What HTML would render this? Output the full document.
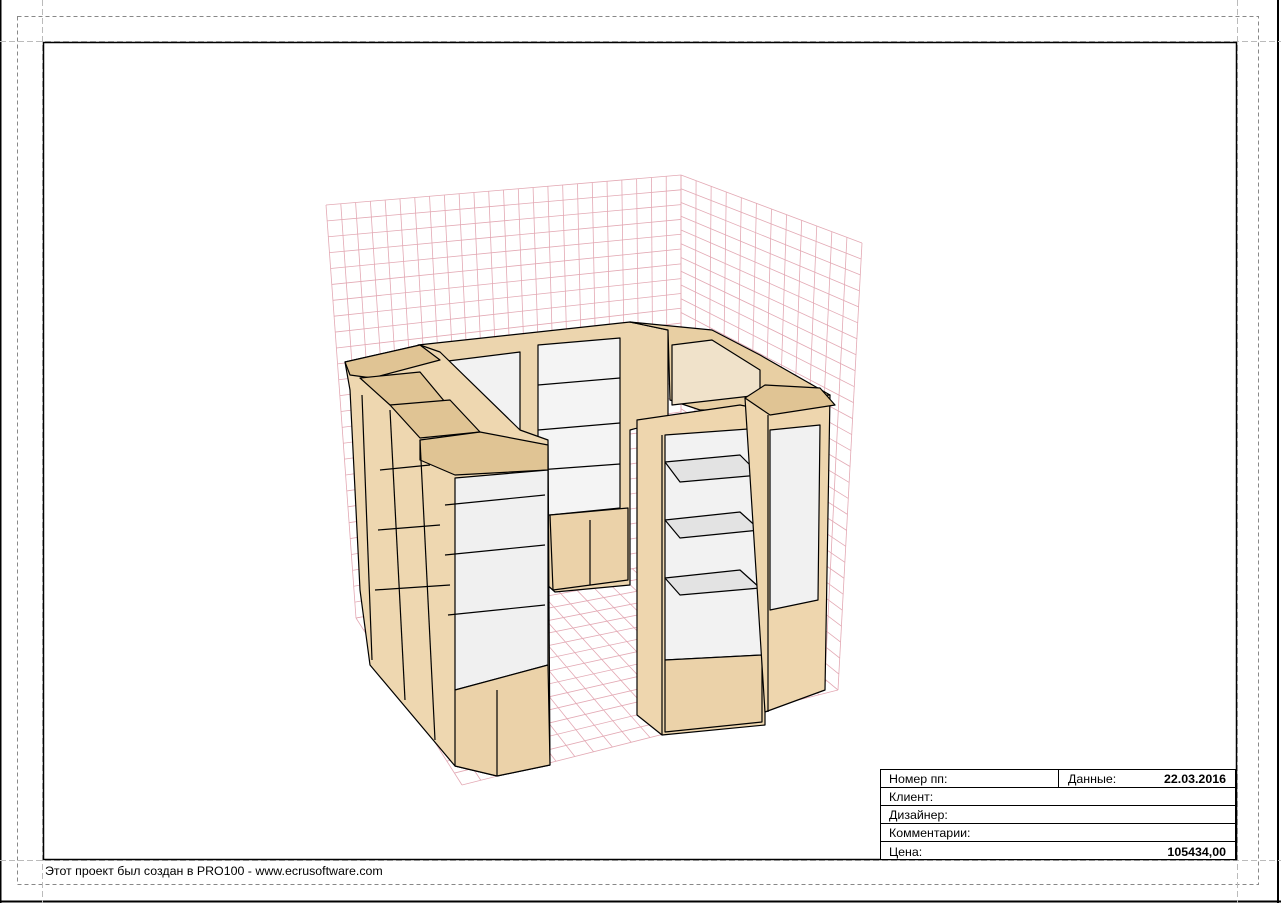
<!DOCTYPE html>
<html><head><meta charset="utf-8"><style>
html,body{margin:0;padding:0;background:#fff;width:1281px;height:903px;overflow:hidden;position:relative;font-family:"Liberation Sans",Arial,sans-serif}
.abs{position:absolute}
</style></head><body>
<svg class="abs" style="left:0;top:0" width="1281" height="903">
<line x1="0.5" y1="0" x2="0.5" y2="903" stroke="#000" stroke-width="2"/>
<line x1="1278" y1="0" x2="1278" y2="903" stroke="#000" stroke-width="2"/>
<line x1="0" y1="901.5" x2="1281" y2="901.5" stroke="#000" stroke-width="2"/>
<rect x="17.5" y="16.5" width="1241" height="868" fill="none" stroke="#888" stroke-dasharray="4,3"/>
<line x1="42.5" y1="0" x2="42.5" y2="903" stroke="#bbb" stroke-dasharray="6,3"/>
<line x1="0" y1="41.5" x2="1281" y2="41.5" stroke="#bbb" stroke-dasharray="6,3"/>
<line x1="1237.5" y1="0" x2="1237.5" y2="903" stroke="#bbb" stroke-dasharray="6,3"/>
<line x1="0" y1="860.5" x2="1281" y2="860.5" stroke="#bbb" stroke-dasharray="6,3"/>
<rect x="43.5" y="42.5" width="1193" height="817" fill="#fff" stroke="#000" stroke-width="1.5"/>
<g id="grid" stroke="#e3a9b4" stroke-width="0.8" fill="none"></g>
<g stroke="#000" stroke-width="1.2" stroke-linejoin="round">
<polygon points="418,345 630,322 668,330 668,420 630,430 630,585 555,592 420,470" fill="#ecd5ae"/>
<polygon points="440,362 520,352 520,430 440,420" fill="#f2f2f2"/>
<polygon points="538,345 620,338 620,508 550,515 538,515" fill="#f4f4f4"/>
<polygon points="550,515 628,508 628,580 553,590" fill="#ebd2a9"/>
<line x1="538" y1="385" x2="620" y2="378"/><line x1="538" y1="430" x2="620" y2="423"/><line x1="538" y1="470" x2="620" y2="464"/>
<line x1="590" y1="520" x2="590" y2="585"/>
<polygon points="630,322 712,330 760,355 830,395 765,410 700,410 670,400 668,330" fill="#e8cfa3"/>
<polygon points="672,345 712,340 760,370 760,395 672,405" fill="#f0e2ca"/>
<polygon points="345,362 420,345 440,352 520,430 548,440 550,765 497,776 455,766 370,665 360,590 350,390" fill="#eed7b0"/>
<polygon points="345,362 420,345 440,360 372,378 350,375" fill="#e0c494"/>
<polygon points="360,378 420,372 450,408 390,405" fill="#e0c494"/>
<polygon points="390,405 450,400 480,432 420,438" fill="#e0c494"/>
<polygon points="420,440 480,432 548,445 548,470 455,475 420,460" fill="#e0c494"/>
<polygon points="455,478 548,470 548,665 455,690" fill="#f0f0f0"/>
<polygon points="455,690 548,665 550,765 497,776 455,766" fill="#ebd2a9"/>
<line x1="497" y1="690" x2="497" y2="776"/>
<line x1="380" y1="470" x2="430" y2="465"/><line x1="378" y1="530" x2="440" y2="525"/><line x1="375" y1="590" x2="450" y2="585"/>
<line x1="445" y1="505" x2="545" y2="495"/><line x1="445" y1="555" x2="545" y2="545"/><line x1="448" y1="615" x2="545" y2="605"/>
<line x1="362" y1="395" x2="372" y2="660"/><line x1="390" y1="410" x2="405" y2="700"/><line x1="420" y1="440" x2="435" y2="740"/>
<polygon points="637,420 740,405 765,410 765,725 662,735 637,715" fill="#eed6ae"/>
<polygon points="665,435 762,428 762,655 665,660" fill="#f2f2f2"/>
<polygon points="665,660 762,655 762,722 665,732" fill="#ebd2a9"/>
<polygon points="665,462 740,455 760,475 680,482" fill="#e3e3e3"/><polygon points="665,520 740,512 760,530 680,538" fill="#e3e3e3"/><polygon points="665,578 740,570 760,588 680,595" fill="#e3e3e3"/>
<line x1="662" y1="435" x2="662" y2="735"/>
<polygon points="745,398 830,395 825,690 765,712" fill="#eed6ae"/>
<polygon points="770,430 820,425 818,600 770,610" fill="#f1f1f1"/>
<polygon points="745,398 765,385 820,388 835,405 770,415" fill="#e0c494"/>
<line x1="768" y1="415" x2="768" y2="712"/>
</g>
</svg>
<script>
(function(){
var g=document.getElementById('grid'),s='';
function L(a,b){s+='<line x1="'+a[0]+'" y1="'+a[1]+'" x2="'+b[0]+'" y2="'+b[1]+'"/>';}
function lerp(a,b,t){return [a[0]+(b[0]-a[0])*t,a[1]+(b[1]-a[1])*t];}
function quad(p0,p1,p2,p3,n,m){for(var i=0;i<=n;i++){var t=i/n;L(lerp(p0,p1,t),lerp(p3,p2,t));}for(var j=0;j<=m;j++){var u=j/m;L(lerp(p0,p3,u),lerp(p1,p2,u));}}
quad([326,205],[681,175],[681,560],[356,618],24,26);
quad([681,175],[862,243],[838,690],[681,560],12,28);
quad([356,618],[681,560],[838,690],[462,785],20,14);
g.innerHTML=s;})();
</script>
<div class="abs" style="left:45px;top:864px;font-size:12.4px;color:#000">Этот проект был создан в PRO100 - www.ecrusoftware.com</div>
<div class="abs" style="left:880px;top:769px;width:356px;height:91px;border:1px solid #000;box-sizing:border-box;font-size:12.4px;background:#fff">
<div style="height:18px;border-bottom:1px solid #000;position:relative;box-sizing:border-box">
<span class="abs" style="left:8px;top:2px">Номер пп:</span>
<div class="abs" style="left:177px;top:0;width:1px;height:17px;background:#000"></div>
<span class="abs" style="left:187px;top:2px">Данные:</span>
<b class="abs" style="right:9px;top:2px">22.03.2016</b></div>
<div style="height:18px;border-bottom:1px solid #000;box-sizing:border-box;padding:2px 8px">Клиент:</div>
<div style="height:18px;border-bottom:1px solid #000;box-sizing:border-box;padding:2px 8px">Дизайнер:</div>
<div style="height:18px;border-bottom:1px solid #000;box-sizing:border-box;padding:2px 8px">Комментарии:</div>
<div style="height:17px;position:relative;padding:3px 8px;box-sizing:border-box">Цена:<b class="abs" style="right:9px;top:3px">105434,00</b></div>
</div>
</body></html>
